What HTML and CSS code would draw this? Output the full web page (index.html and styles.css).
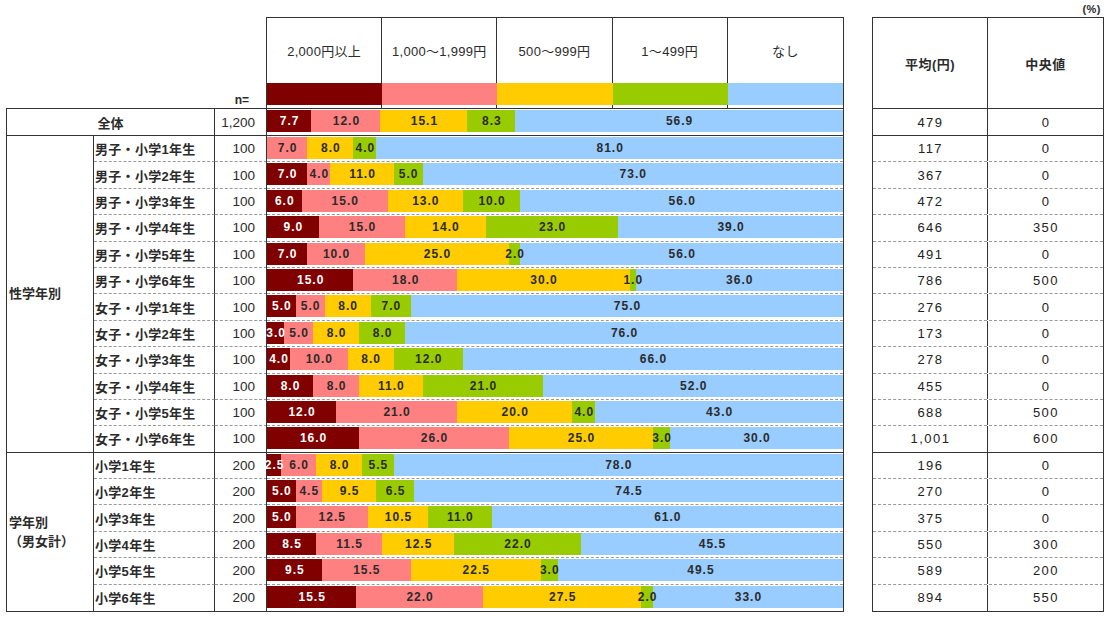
FILE: index.html
```html
<!DOCTYPE html>
<html lang="ja">
<head>
<meta charset="utf-8">
<title>お小遣い</title>
<link rel="stylesheet" href="styles.css">
</head>
<body>
<div class="page">
  <div class="topbar">(%)</div>
  <div class="main">
    <!-- left labels -->
    <div class="left">
      <div class="lhead"><span class="nlabel">n=</span></div>
      <div class="lbody">
        <div class="cell all-label">全体</div>
        <div class="cell all-n">1,200</div>

        <div class="cell cat cat1">性学年別</div>
        <div class="cell lbl">男子・小学1年生</div><div class="cell n">100</div>
        <div class="cell lbl">男子・小学2年生</div><div class="cell n">100</div>
        <div class="cell lbl">男子・小学3年生</div><div class="cell n">100</div>
        <div class="cell lbl">男子・小学4年生</div><div class="cell n">100</div>
        <div class="cell lbl">男子・小学5年生</div><div class="cell n">100</div>
        <div class="cell lbl">男子・小学6年生</div><div class="cell n">100</div>
        <div class="cell lbl">女子・小学1年生</div><div class="cell n">100</div>
        <div class="cell lbl">女子・小学2年生</div><div class="cell n">100</div>
        <div class="cell lbl">女子・小学3年生</div><div class="cell n">100</div>
        <div class="cell lbl">女子・小学4年生</div><div class="cell n">100</div>
        <div class="cell lbl">女子・小学5年生</div><div class="cell n">100</div>
        <div class="cell lbl last">女子・小学6年生</div><div class="cell n last">100</div>

        <div class="cell cat cat2">学年別<br>（男女計）</div>
        <div class="cell lbl">小学1年生</div><div class="cell n">200</div>
        <div class="cell lbl">小学2年生</div><div class="cell n">200</div>
        <div class="cell lbl">小学3年生</div><div class="cell n">200</div>
        <div class="cell lbl">小学4年生</div><div class="cell n">200</div>
        <div class="cell lbl">小学5年生</div><div class="cell n">200</div>
        <div class="cell lbl endrow">小学6年生</div><div class="cell n endrow">200</div>
      </div>
    </div>

    <!-- chart -->
    <div class="chart">
      <div class="chead">
        <div class="hcell"><div class="hlabel">2,000円以上</div><div class="swatch c1"></div></div>
        <div class="hcell"><div class="hlabel">1,000～1,999円</div><div class="swatch c2"></div></div>
        <div class="hcell"><div class="hlabel">500～999円</div><div class="swatch c3"></div></div>
        <div class="hcell"><div class="hlabel">1～499円</div><div class="swatch c4"></div></div>
        <div class="hcell lastcol"><div class="hlabel">なし</div><div class="swatch c5"></div></div>
      </div>
      <div class="cbody">
        <div class="crow first"><div class="bar">
          <div class="s c1" style="width:7.7%"><span>7.7</span></div><div class="s c2" style="width:12%"><span>12.0</span></div><div class="s c3" style="width:15.1%"><span>15.1</span></div><div class="s c4" style="width:8.3%"><span>8.3</span></div><div class="s c5" style="width:56.9%"><span>56.9</span></div>
        </div></div>

        <div class="crow"><div class="bar">
          <div class="s c2" style="width:7%"><span>7.0</span></div><div class="s c3" style="width:8%"><span>8.0</span></div><div class="s c4" style="width:4%"><span>4.0</span></div><div class="s c5" style="width:81%"><span>81.0</span></div>
        </div></div>
        <div class="crow"><div class="bar">
          <div class="s c1" style="width:7%"><span>7.0</span></div><div class="s c2" style="width:4%"><span>4.0</span></div><div class="s c3" style="width:11%"><span>11.0</span></div><div class="s c4" style="width:5%"><span>5.0</span></div><div class="s c5" style="width:73%"><span>73.0</span></div>
        </div></div>
        <div class="crow"><div class="bar">
          <div class="s c1" style="width:6%"><span>6.0</span></div><div class="s c2" style="width:15%"><span>15.0</span></div><div class="s c3" style="width:13%"><span>13.0</span></div><div class="s c4" style="width:10%"><span>10.0</span></div><div class="s c5" style="width:56%"><span>56.0</span></div>
        </div></div>
        <div class="crow"><div class="bar">
          <div class="s c1" style="width:9%"><span>9.0</span></div><div class="s c2" style="width:15%"><span>15.0</span></div><div class="s c3" style="width:14%"><span>14.0</span></div><div class="s c4" style="width:23%"><span>23.0</span></div><div class="s c5" style="width:39%"><span>39.0</span></div>
        </div></div>
        <div class="crow"><div class="bar">
          <div class="s c1" style="width:7%"><span>7.0</span></div><div class="s c2" style="width:10%"><span>10.0</span></div><div class="s c3" style="width:25%"><span>25.0</span></div><div class="s c4" style="width:2%"><span>2.0</span></div><div class="s c5" style="width:56%"><span>56.0</span></div>
        </div></div>
        <div class="crow"><div class="bar">
          <div class="s c1" style="width:15%"><span>15.0</span></div><div class="s c2" style="width:18%"><span>18.0</span></div><div class="s c3" style="width:30%"><span>30.0</span></div><div class="s c4" style="width:1%"><span>1.0</span></div><div class="s c5" style="width:36%"><span>36.0</span></div>
        </div></div>
        <div class="crow"><div class="bar">
          <div class="s c1" style="width:5%"><span>5.0</span></div><div class="s c2" style="width:5%"><span>5.0</span></div><div class="s c3" style="width:8%"><span>8.0</span></div><div class="s c4" style="width:7%"><span>7.0</span></div><div class="s c5" style="width:75%"><span>75.0</span></div>
        </div></div>
        <div class="crow"><div class="bar">
          <div class="s c1" style="width:3%"><span>3.0</span></div><div class="s c2" style="width:5%"><span>5.0</span></div><div class="s c3" style="width:8%"><span>8.0</span></div><div class="s c4" style="width:8%"><span>8.0</span></div><div class="s c5" style="width:76%"><span>76.0</span></div>
        </div></div>
        <div class="crow"><div class="bar">
          <div class="s c1" style="width:4%"><span>4.0</span></div><div class="s c2" style="width:10%"><span>10.0</span></div><div class="s c3" style="width:8%"><span>8.0</span></div><div class="s c4" style="width:12%"><span>12.0</span></div><div class="s c5" style="width:66%"><span>66.0</span></div>
        </div></div>
        <div class="crow"><div class="bar">
          <div class="s c1" style="width:8%"><span>8.0</span></div><div class="s c2" style="width:8%"><span>8.0</span></div><div class="s c3" style="width:11%"><span>11.0</span></div><div class="s c4" style="width:21%"><span>21.0</span></div><div class="s c5" style="width:52%"><span>52.0</span></div>
        </div></div>
        <div class="crow"><div class="bar">
          <div class="s c1" style="width:12%"><span>12.0</span></div><div class="s c2" style="width:21%"><span>21.0</span></div><div class="s c3" style="width:20%"><span>20.0</span></div><div class="s c4" style="width:4%"><span>4.0</span></div><div class="s c5" style="width:43%"><span>43.0</span></div>
        </div></div>
        <div class="crow last"><div class="bar">
          <div class="s c1" style="width:16%"><span>16.0</span></div><div class="s c2" style="width:26%"><span>26.0</span></div><div class="s c3" style="width:25%"><span>25.0</span></div><div class="s c4" style="width:3%"><span>3.0</span></div><div class="s c5" style="width:30%"><span>30.0</span></div>
        </div></div>

        <div class="crow"><div class="bar">
          <div class="s c1" style="width:2.5%"><span>2.5</span></div><div class="s c2" style="width:6%"><span>6.0</span></div><div class="s c3" style="width:8%"><span>8.0</span></div><div class="s c4" style="width:5.5%"><span>5.5</span></div><div class="s c5" style="width:78%"><span>78.0</span></div>
        </div></div>
        <div class="crow"><div class="bar">
          <div class="s c1" style="width:5%"><span>5.0</span></div><div class="s c2" style="width:4.5%"><span>4.5</span></div><div class="s c3" style="width:9.5%"><span>9.5</span></div><div class="s c4" style="width:6.5%"><span>6.5</span></div><div class="s c5" style="width:74.5%"><span>74.5</span></div>
        </div></div>
        <div class="crow"><div class="bar">
          <div class="s c1" style="width:5%"><span>5.0</span></div><div class="s c2" style="width:12.5%"><span>12.5</span></div><div class="s c3" style="width:10.5%"><span>10.5</span></div><div class="s c4" style="width:11%"><span>11.0</span></div><div class="s c5" style="width:61%"><span>61.0</span></div>
        </div></div>
        <div class="crow"><div class="bar">
          <div class="s c1" style="width:8.5%"><span>8.5</span></div><div class="s c2" style="width:11.5%"><span>11.5</span></div><div class="s c3" style="width:12.5%"><span>12.5</span></div><div class="s c4" style="width:22%"><span>22.0</span></div><div class="s c5" style="width:45.5%"><span>45.5</span></div>
        </div></div>
        <div class="crow"><div class="bar">
          <div class="s c1" style="width:9.5%"><span>9.5</span></div><div class="s c2" style="width:15.5%"><span>15.5</span></div><div class="s c3" style="width:22.5%"><span>22.5</span></div><div class="s c4" style="width:3%"><span>3.0</span></div><div class="s c5" style="width:49.5%"><span>49.5</span></div>
        </div></div>
        <div class="crow endrow"><div class="bar">
          <div class="s c1" style="width:15.5%"><span>15.5</span></div><div class="s c2" style="width:22%"><span>22.0</span></div><div class="s c3" style="width:27.5%"><span>27.5</span></div><div class="s c4" style="width:2%"><span>2.0</span></div><div class="s c5" style="width:33%"><span>33.0</span></div>
        </div></div>
      </div>
    </div>

    <!-- right table -->
    <div class="right">
      <div class="rhead">
        <div class="rh">平均(円)</div>
        <div class="rh">中央値</div>
      </div>
      <div class="rbody">
        <div class="rrow first"><div class="rc">479</div><div class="rc">0</div></div>
        <div class="rrow"><div class="rc">117</div><div class="rc">0</div></div>
        <div class="rrow"><div class="rc">367</div><div class="rc">0</div></div>
        <div class="rrow"><div class="rc">472</div><div class="rc">0</div></div>
        <div class="rrow"><div class="rc">646</div><div class="rc">350</div></div>
        <div class="rrow"><div class="rc">491</div><div class="rc">0</div></div>
        <div class="rrow"><div class="rc">786</div><div class="rc">500</div></div>
        <div class="rrow"><div class="rc">276</div><div class="rc">0</div></div>
        <div class="rrow"><div class="rc">173</div><div class="rc">0</div></div>
        <div class="rrow"><div class="rc">278</div><div class="rc">0</div></div>
        <div class="rrow"><div class="rc">455</div><div class="rc">0</div></div>
        <div class="rrow"><div class="rc">688</div><div class="rc">500</div></div>
        <div class="rrow last"><div class="rc">1,001</div><div class="rc">600</div></div>
        <div class="rrow"><div class="rc">196</div><div class="rc">0</div></div>
        <div class="rrow"><div class="rc">270</div><div class="rc">0</div></div>
        <div class="rrow"><div class="rc">375</div><div class="rc">0</div></div>
        <div class="rrow"><div class="rc">550</div><div class="rc">300</div></div>
        <div class="rrow"><div class="rc">589</div><div class="rc">200</div></div>
        <div class="rrow endrow"><div class="rc">894</div><div class="rc">550</div></div>
      </div>
    </div>
  </div>
</div>
</body>
</html>
```

FILE: styles.css
```css
* { box-sizing: border-box; }

body {
  margin: 0;
  background: #fff;
  color: #2b2b2b;
  font-family: "Liberation Sans", "Noto Sans CJK JP", sans-serif;
}

.page {
  width: 1110px;
  height: 621px;
}

.topbar {
  height: 17px;
  display: flex;
  justify-content: flex-end;
  padding: 3px 9px 0 0;
  font-size: 11px;
  line-height: 12px;
  font-weight: bold;
  letter-spacing: 0.5px;
}

.main {
  display: flex;
  align-items: flex-start;
  padding-left: 6px;
}

/* ---------- left ---------- */
.left { width: 260px; }

.lhead {
  height: 91px;
  display: flex;
  justify-content: flex-end;
  align-items: flex-end;
  padding: 0 17px 2px 0;
}

.nlabel {
  font-size: 12px;
  line-height: 12px;
  font-weight: bold;
}

.lbody {
  display: grid;
  grid-template-columns: 87px 121px 52px;
  grid-template-rows: 27px repeat(18, 26.4px);
  border: 1px solid #333;
  border-right: none;
}

.cell {
  display: flex;
  align-items: center;
  font-size: 13px;
  white-space: nowrap;
}

.all-label {
  grid-column: 1 / 3;
  justify-content: center;
  border-right: 1px solid #333;
  border-bottom: 1px solid #333;
  font-weight: bold;
}

.all-n {
  grid-column: 3;
  justify-content: flex-end;
  padding-right: 12px;
  border-bottom: 1px solid #333;
  font-size: 13.5px;
}

.cat {
  grid-column: 1;
  border-right: 1px solid #333;
  border-bottom: 1px solid #333;
  padding-left: 2px;
  font-weight: bold;
  line-height: 19px;
}
.cat1 { grid-row: 2 / span 12; }
.cat2 { grid-row: 14 / span 6; border-bottom: none; }

.lbl {
  grid-column: 2;
  border-right: 1px solid #333;
  border-bottom: 1px dashed #999;
  padding-left: 1px;
  font-weight: bold;
  letter-spacing: 0.3px;
}

.n {
  grid-column: 3;
  justify-content: flex-end;
  padding-right: 12px;
  border-bottom: 1px dashed #999;
  font-size: 13.5px;
}

.lbl.last, .n.last { border-bottom: 1px solid #333; }
.lbl.endrow, .n.endrow { border-bottom: none; }

/* ---------- chart ---------- */
.chart { width: 578px; }

.chead {
  height: 91px;
  display: grid;
  grid-template-columns: repeat(5, 1fr);
  border: 1px solid #333;
  border-bottom: none;
}

.hcell {
  border-right: 1px solid #333;
  padding-bottom: 3px;
}
.hcell.lastcol { border-right: none; }

.hlabel {
  height: 65px;
  display: flex;
  align-items: center;
  justify-content: center;
  font-size: 13px;
  letter-spacing: 0.3px;
}

.swatch {
  height: 22px;
  margin-right: -1px;
}
.lastcol .swatch { margin-right: 0; }

.c1 { background: #800000; color: #fff; }
.c2 { background: #ff8080; }
.c3 { background: #ffcc00; }
.c4 { background: #99cc00; }
.c5 { background: #99ccff; }

.cbody {
  border: 1px solid #333;
}

.crow {
  height: 26.4px;
  padding-top: 1px;
  border-bottom: 1px dashed #999;
}
.crow.first { height: 27px; border-bottom: 1px solid #333; }
.crow.last { border-bottom: 1px solid #333; }
.crow.endrow { border-bottom: none; }

.bar {
  height: 22px;
  display: flex;
}

.s {
  flex: none;
  min-width: 0;
  display: flex;
  align-items: center;
  justify-content: center;
  white-space: nowrap;
  font-size: 12px;
  font-weight: bold;
  letter-spacing: 1px;
}

.s span {
  position: relative;
  z-index: 1;
  flex: none;
  padding-left: 1px;
}

/* ---------- right ---------- */
.right {
  width: 232px;
  margin-left: 28px;
}

.rhead {
  height: 91px;
  display: grid;
  grid-template-columns: 115px 115px;
  border: 1px solid #333;
  border-bottom: none;
}

.rh {
  display: flex;
  align-items: center;
  justify-content: center;
  font-size: 13px;
  font-weight: bold;
  letter-spacing: 0.5px;
}
.rh:first-child { border-right: 1px solid #333; }

.rbody { border: 1px solid #333; }

.rrow {
  height: 26.4px;
  display: grid;
  grid-template-columns: 115px 115px;
  border-bottom: 1px dashed #999;
}
.rrow.first { height: 27px; border-bottom: 1px solid #333; }
.rrow.last { border-bottom: 1px solid #333; }
.rrow.endrow { border-bottom: none; }

.rc {
  display: flex;
  align-items: center;
  justify-content: center;
  font-size: 13px;
  letter-spacing: 1.5px;
  padding-left: 1px;
  color: #222;
}
.rc:first-child { border-right: 1px solid #333; }
```
